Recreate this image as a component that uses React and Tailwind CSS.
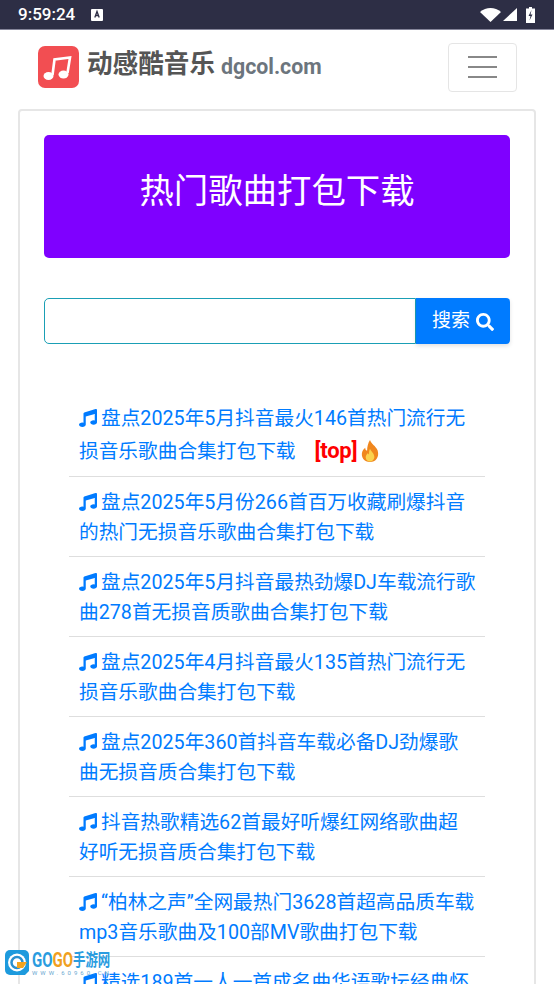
import { FaSearch } from 'react-icons/fa';

const songs = [
  '盘点2025年5月份266首百万收藏刷爆抖音的热门无损音乐歌曲合集打包下载',
  '盘点2025年5月抖音最热劲爆DJ车载流行歌曲278首无损音质歌曲合集打包下载',
  '盘点2025年4月抖音最火135首热门流行无损音乐歌曲合集打包下载',
  '盘点2025年360首抖音车载必备DJ劲爆歌曲无损音质合集打包下载',
  '抖音热歌精选62首最好听爆红网络歌曲超好听无损音质合集打包下载',
  '“柏林之声”全网最热门3628首超高品质车载mp3音乐歌曲及100部MV歌曲打包下载',
  '精选189首一人一首成名曲华语歌坛经典怀旧老歌合集打包下载',
];

function Note({ className }) {
  return (
    <svg viewBox="0 0 512 512" className={className} fill="currentColor">
      <path d="M470.4 1.5L150.4 96A32 32 0 0 0 128 126.5v261.4A139 139 0 0 0 96 384c-53 0-96 28.7-96 64s43 64 96 64 96-28.7 96-64V214.3l256-75v184.6a138.4 138.4 0 0 0-32-3.9c-53 0-96 28.7-96 64s43 64 96 64 96-28.7 96-64V32a32 32 0 0 0-41.6-30.5z" />
    </svg>
  );
}

function Flame() {
  return (
    <svg viewBox="0 0 20 24" className="w-[20px] h-[23px] shrink-0">
      <path d="M10 0c1 4 6 6 8 11 2 7-2 12-8 12S0 18 2 12c.8-2 2-3 3-4 0 2 1 3 2 3 0-4 1-8 3-11z" fill="#f0871e" />
      <path d="M10 9c1 3 5 5 4.500 9.500C14 21 12 22.500 10 22.500S5.500 21 5.500 18c0-2 1.500-3.500 2.500-4.500 0 1 .5 1.500 1 1.500 0-2 0-4 1-6z" fill="#fbd24e" />
    </svg>
  );
}

function SongLink({ children }) {
  return (
    <>
      <Note className="inline-block w-[18px] h-[18px] mr-[4px] align-[-2px]" />
      {children}
    </>
  );
}

export default function App() {
  return (
    <div className="relative w-[554px] h-[984px] overflow-hidden bg-white font-['Roboto','Noto_Sans_CJK_SC',sans-serif]">
      {/* status bar */}
      <div className="h-[30px] bg-[#2d2e45] border-b border-[#85859a] flex items-center pl-[18px] pr-[19px] text-white">
        <span className="text-[17px] font-medium leading-none">9:59:24</span>
        <svg viewBox="0 0 12 12" className="w-[12px] h-[12px] ml-[16px]">
          <rect width="12" height="12" rx="1" fill="#fff" />
          <path d="M3.800 8.500l2.200-6 2.200 6M4.600 6.500h2.800" stroke="#2d2e45" strokeWidth="1.300" fill="none" />
        </svg>
        <div className="ml-auto flex items-center">
          <svg viewBox="0 0 21 14" className="w-[21px] h-[14px]">
            <path d="M0 4C6-1.300 15-1.300 21 4L10.500 14z" fill="#fff" />
          </svg>
          <svg viewBox="0 0 14 13" className="w-[14px] h-[13px] ml-[2px]">
            <path d="M14 0v13H0z" fill="#fff" />
          </svg>
          <svg viewBox="0 0 9 16" className="w-[9px] h-[16px] ml-[9px]">
            <path d="M3 0h3v1.500h3V16H0V1.500h3z" fill="#fff" />
            <path d="M5.500 3L2.500 9h2l-1 4.500L6.500 7.500h-2z" fill="#2d2e45" />
          </svg>
        </div>
      </div>

      {/* navbar */}
      <div className="h-[79px] pb-[5px] pl-[38px] pr-[37px] flex items-center">
        <div className="w-[41px] h-[42px] rounded-[7px] bg-[#f24e52] shrink-0">
          <svg viewBox="0 0 41 42" className="w-[41px] h-[42px]" fill="#fff">
            <path d="M14.500 29L16.500 13.500L32 11.500L29.500 27" fill="none" stroke="#fff" strokeWidth="2.600" />
            <ellipse cx="10.500" cy="30" rx="5" ry="4" />
            <ellipse cx="25.500" cy="28.500" rx="5" ry="4" />
          </svg>
        </div>
        <span className="ml-[8px] mb-[4px] text-[25.600px] font-bold text-[#555555] leading-none">动感酷音乐</span>
        <span className="ml-[6px] text-[21.300px] font-bold text-[#6c757d] leading-none">dgcol.com</span>
        <button className="ml-auto w-[69px] h-[49px] border border-[#e5e5e5] rounded-[4px] flex flex-col items-center justify-center gap-[8px]">
          <span className="block w-[29px] h-[2px] bg-[#888888]" />
          <span className="block w-[29px] h-[2px] bg-[#888888]" />
          <span className="block w-[29px] h-[2px] bg-[#888888]" />
        </button>
      </div>

      {/* card */}
      <div className="mx-[18px] border-2 border-[#e6e6e6] rounded-[4px] pt-[24px] px-[24px]">
        <div className="h-[123px] pb-[10px] rounded-[5px] bg-[#7f00ff] text-white text-[34.400px] flex items-center justify-center">
          热门歌曲打包下载
        </div>

        <div className="mt-[40px] flex h-[46px]">
          <input className="flex-1 min-w-0 border border-[#1a9fb5] rounded-l-[5px] outline-none" />
          <button className="w-[94px] pt-[1px] bg-[#007bff] rounded-r-[4px] text-white text-[19px] flex items-center justify-center gap-[6px] shadow-[0_2px_4px_rgba(0,0,0,0.12)]">
            搜索
            <FaSearch className="w-[18px] h-[18px]" />
          </button>
        </div>

        <ul className="mt-[51px] mx-[25px] text-[19.700px] text-[#007bff]">
          <li className="pl-[10px] pr-[8px] border-b border-[#dedede] leading-[32px] h-[82px] pt-[8px]">
            <SongLink>盘点2025年5月抖音最火146首热门流行无损音乐歌曲合集打包下载</SongLink>
            <span className="inline-flex items-center align-middle ml-[19px] mb-[4px] gap-[3px]">
              <span className="text-[#ff0000] font-bold text-[22px] tracking-[-0.300px]">[top]</span>
              <Flame />
            </span>
          </li>
          {songs.map(song => (
            <li key={song} className="h-[80px] pl-[10px] pr-[8px] pt-[11px] border-b border-[#dedede] leading-[30px]">
              <SongLink>{song}</SongLink>
            </li>
          ))}
        </ul>
      </div>

      {/* watermark */}
      <div className="absolute left-[5px] top-[950px] flex items-start">
        <svg viewBox="0 0 24 25" className="w-[24px] h-[25px]">
          <path d="M5 0h14a5 5 0 0 1 5 5v16l-4 4H5a5 5 0 0 1-5-5V5a5 5 0 0 1 5-5z" fill="#1d9add" />
          <circle cx="12" cy="12.500" r="9" fill="#fff" />
          <circle cx="12" cy="12.500" r="5.500" fill="none" stroke="#2a90cf" strokeWidth="2.500" />
          <path d="M12 12h10l-4 6h-6z" fill="#f3a41f" />
        </svg>
        <div className="ml-[3px]">
          <div className="flex h-[18px] items-center font-bold whitespace-nowrap mt-[1px]">
            <span className="inline-block w-[41px] origin-left scale-x-[0.75] text-[20px] leading-[18px] text-[#2a9ce0]">
              GO<span className="text-[#f0a020]">GO</span>
            </span>
            <span className="inline-block w-[37px] origin-left scale-x-[0.73] text-[17px] leading-[18px] text-[#2a9ce0]">手游网</span>
          </div>
          <div className="mt-[1px] text-[6px] tracking-[3px] text-[#6aa8d0] leading-[6px] whitespace-nowrap">WWW.60960.CN</div>
        </div>
      </div>
    </div>
  );
}
